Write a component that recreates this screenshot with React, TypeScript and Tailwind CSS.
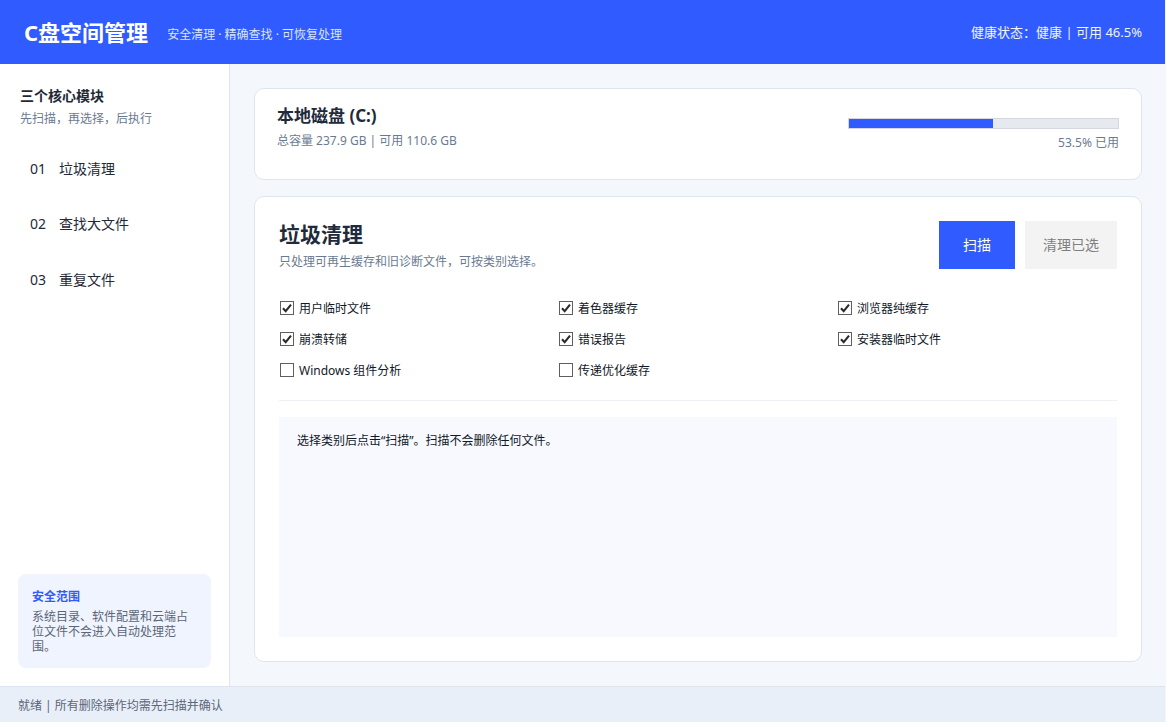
const font = "font-['Noto_Sans','Noto_Sans_CJK_SC',sans-serif]";

function Check({ label, checked }: { label: string; checked?: boolean }) {
  return (
    <label className="flex items-center gap-[5px] h-[16px] text-[12px] text-[#111827]">
      <span className="ml-[1px] w-[14px] h-[14px] border border-[#5f5f5f] bg-white flex items-center justify-center shrink-0">
        {checked && (
          <svg width="12" height="12" viewBox="0 0 12 12" fill="none">
            <path d="M2 6.2 L4.7 9.2 L10 2.6" stroke="#2b2b2b" strokeWidth="2.1" />
          </svg>
        )}
      </span>
      <span className="mt-[2px]">{label}</span>
    </label>
  );
}

function NavItem({ n, label }: { n: string; label: string }) {
  return (
    <div className="h-[55.5px] px-[10px] flex items-center text-[14px] text-[#1f2937]">
      <span className="w-[29px]">{n}</span>
      <span>{label}</span>
    </div>
  );
}

export default function App() {
  return (
    <div className={`${font} w-[1166px] h-[722px] flex flex-col overflow-hidden bg-[#f4f7fc] border-r border-[#f3f6fc]`}>
      <header className="h-[64px] shrink-0 bg-[#2f5bff] flex items-center pl-[24px] pr-[23px] text-white">
        <h1 className="text-[22px] font-bold leading-none">C盘空间管理</h1>
        <span className="ml-[19px] text-[12px] text-[#dbe4ff] mt-[6px]">安全清理 · 精确查找 · 可恢复处理</span>
        <span className="ml-auto text-[13px] text-[#f1f4ff] mt-[2px]">健康状态：健康 | 可用 46.5%</span>
      </header>
      <div className="flex-1 flex min-h-0">
        <aside className="w-[230px] shrink-0 bg-white border-r border-[#dfe5ee] flex flex-col px-[20px] pt-[22px] pb-[18px]">
          <div className="text-[14px] font-bold text-[#1f2937] leading-[20px]">三个核心模块</div>
          <div className="text-[12px] text-[#6b7a90] leading-[18px] mt-[4px]">先扫描，再选择，后执行</div>
          <nav className="mt-[12.7px]">
            <NavItem n="01" label="垃圾清理" />
            <NavItem n="02" label="查找大文件" />
            <NavItem n="03" label="重复文件" />
          </nav>
          <div className="mt-auto -mx-[2px] rounded-[8px] bg-[#f0f4fe] px-[14px] pt-[14px] h-[94px]">
            <div className="text-[12px] font-bold text-[#2f5bff] leading-[17px]">安全范围</div>
            <p className="text-[12px] text-[#5b6678] leading-[15px] mt-[4px]">系统目录、软件配置和云端占位文件不会进入自动处理范围。</p>
          </div>
        </aside>
        <main className="flex-1 min-w-0 pl-[24px] pr-[23px] pt-[24px] flex flex-col gap-[16px] pb-[24px]">
          <section className="h-[92px] shrink-0 bg-white border border-[#dfe5ee] rounded-[10px] pl-[22px] pr-[22px] pt-[15px] flex justify-between">
            <div>
              <div className="text-[17px] font-bold text-[#1f2a3a] leading-[24px]">本地磁盘 (C:)</div>
              <div className="text-[12px] text-[#6b7a90] leading-[18px] mt-[4px]">总容量 237.9 GB | 可用 110.6 GB</div>
            </div>
            <div className="w-[271px] pt-[14px]">
              <div className="h-[11px] border border-[#d4d8de] bg-[#e6e9ef]">
                <div className="h-full w-[53.5%] bg-[#2f5bff]" />
              </div>
              <div className="text-right text-[12px] text-[#6b7a90] leading-[18px] mt-[5px]">53.5% 已用</div>
            </div>
          </section>
          <section className="flex-1 min-h-0 bg-white border border-[#dfe5ee] rounded-[10px] px-[24px] pt-[24px] pb-[24px] flex flex-col">
            <div className="flex justify-between items-start h-[48px]">
              <div>
                <h2 className="text-[21px] font-bold text-[#1f2a3a] leading-[26px]">垃圾清理</h2>
                <p className="text-[12px] text-[#6b7a90] leading-[18px] mt-[6px]">只处理可再生缓存和旧诊断文件，可按类别选择。</p>
              </div>
              <div className="flex gap-[10px]">
                <button className="w-[76px] h-[48px] bg-[#2f5bff] text-white text-[14px] pb-[2px]">扫描</button>
                <button className="w-[92px] h-[48px] bg-[#f3f3f3] text-[#7f7f7f] text-[14px] pb-[2px]">清理已选</button>
              </div>
            </div>
            <div className="grid grid-cols-[279px_279px_1fr] gap-y-[15px] mt-[31px]">
              <Check label="用户临时文件" checked />
              <Check label="着色器缓存" checked />
              <Check label="浏览器纯缓存" checked />
              <Check label="崩溃转储" checked />
              <Check label="错误报告" checked />
              <Check label="安装器临时文件" checked />
              <Check label="Windows 组件分析" />
              <Check label="传递优化缓存" />
            </div>
            <hr className="border-0 h-[1px] bg-[#edf0f5] mt-[22px]" />
            <div className="mt-[16px] flex-1 bg-[#f8f9fe] px-[18px] pt-[15px] text-[12px] leading-[18px] text-[#111827]">
              选择类别后点击“扫描”。扫描不会删除任何文件。
            </div>
          </section>
        </main>
      </div>
      <footer className="h-[36px] shrink-0 bg-[#e9eff8] border-t border-[#dfe5ee] pl-[18px] pt-[2px] flex items-center text-[12px] text-[#5b6678]">
        就绪 | 所有删除操作均需先扫描并确认
      </footer>
    </div>
  );
}
